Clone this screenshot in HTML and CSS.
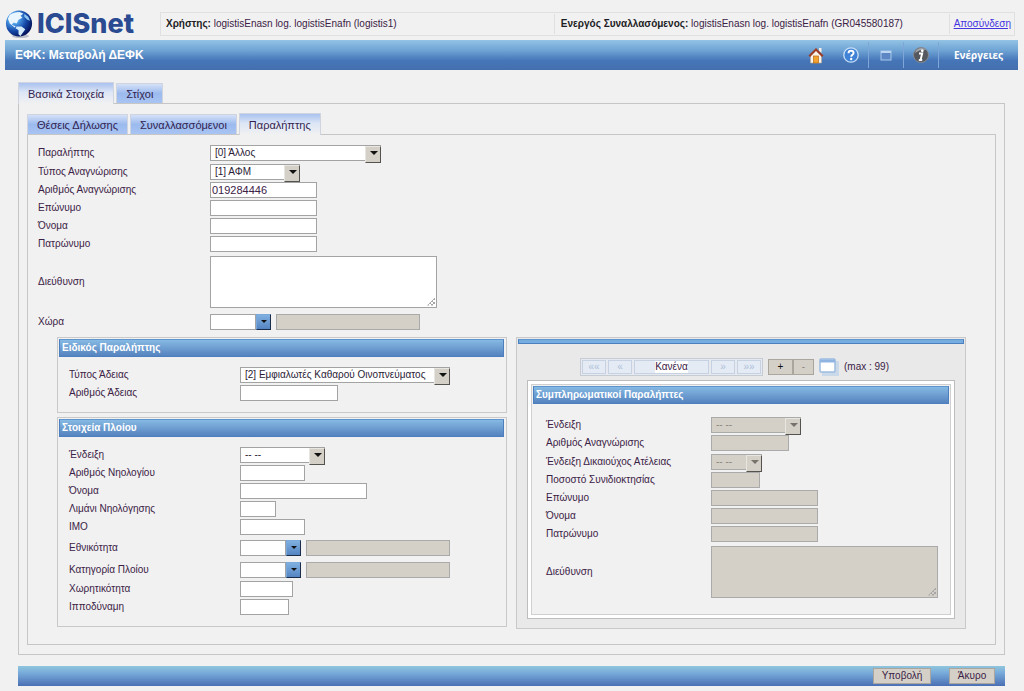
FILE: index.html
```html
<!DOCTYPE html>
<html lang="el">
<head>
<meta charset="utf-8">
<title>ICISnet - ΕΦΚ: Μεταβολή ΔΕΦΚ</title>
<link rel="stylesheet" href="styles.css">
</head>
<body>
<header class="top">
  <div class="logo">
    <svg class="globe" viewBox="0 0 30 30" aria-hidden="true">
      <defs><radialGradient id="sea" cx="0.3" cy="0.3" r="0.75"><stop offset="0" stop-color="#c3e8ff"/><stop offset="0.3" stop-color="#4c9be4"/><stop offset="0.65" stop-color="#1549a8"/><stop offset="1" stop-color="#04145c"/></radialGradient></defs>
      <ellipse cx="16" cy="27" rx="9" ry="2" fill="#b9bec8"/>
      <circle cx="14.500" cy="14" r="13.500" fill="url(#sea)"/>
      <path d="M5 5 Q9 2 15 2 L19 4 L16 6 L18 8 L14 10 L12 14 L9 13 L7 15 L11 17 L10 18 L5 14 L3 9Z" fill="#e9f6ff"/>
      <path d="M12 17 L17 17 L21 20 L18 24 L16 27 L14 25 L14 21 L11 19Z" fill="#d4ebfc"/>
      <path d="M20 4 L24 7 L26 11 L23 10 L20 7Z" fill="#8fc6f2"/>
    </svg>
    <span class="logo-text">ICISnet</span>
  </div>
  <div class="session">
    <div class="cell user"><b>Χρήστης:</b> logistisEnasn log. logistisEnafn (logistis1)</div>
    <div class="cell trader"><b>Ενεργός Συναλλασόμενος:</b> logistisEnasn log. logistisEnafn (GR045580187)</div>
    <div class="cell"><a href="#">Αποσύνδεση</a></div>
  </div>
</header>

<div class="titlebar">
  <h1>ΕΦΚ: Μεταβολή ΔΕΦΚ</h1>
  <nav class="tools">
    <button class="tool" aria-label="Αρχική">
      <svg viewBox="0 0 16 18"><path d="M2.500 9 L8 4 L13.500 9 V17 H2.500Z" fill="#f7f3ea" stroke="#b9a893" stroke-width=".6"/><path d="M11 2h2.500v5l-2.500-2z" fill="#f5eee5"/><path d="M.5 9.500 L8 2 L15.500 9.500 L14 11 L8 5 L2 11Z" fill="#9d3b24"/><rect x="5.500" y="10" width="5" height="7" fill="#f2a22e" stroke="#b96a12" stroke-width=".7"/></svg>
    </button>
    <button class="tool" aria-label="Βοήθεια">
      <svg viewBox="0 0 16 18"><circle cx="8" cy="9" r="7.200" fill="#3f82d6" stroke="#c8e0f7" stroke-width="1.300"/><path d="M5.500 7.200C5.500 5.600 6.600 4.800 8 4.800s2.600.9 2.600 2.200c0 1.700-2.400 1.900-2.400 3.800" fill="none" stroke="#fff" stroke-width="1.900"/><circle cx="8.200" cy="13" r="1.200" fill="#fff"/></svg>
    </button>
    <button class="tool split" aria-label="Παράθυρο">
      <svg viewBox="0 0 16 18"><rect x="3" y="5" width="10" height="9" fill="#5c87c4" stroke="#a9c8ea"/><path d="M3 6h10" stroke="#bcd6f1" stroke-width="2"/></svg>
    </button>
    <button class="tool split" aria-label="Πληροφορίες">
      <svg viewBox="0 0 16 18"><circle cx="8" cy="9" r="7.500" fill="#55585e" stroke="#84888f"/><path d="M2 7a6.500 6.500 0 0 1 11-3q-6-1-11 3z" fill="#a5a8ad"/><circle cx="9.300" cy="4.800" r="1.400" fill="#fff"/><path d="M6 7.500h3.200L7.600 13.800M5.800 14h3.400" fill="none" stroke="#fff" stroke-width="1.900"/></svg>
    </button>
    <button class="actions">Ενέργειες</button>
  </nav>
</div>

<main class="work">
  <div class="tabs" role="tablist">
    <button class="tab on" role="tab" aria-selected="true">Βασικά Στοιχεία</button>
    <button class="tab" role="tab" aria-selected="false">Στίχοι</button>
  </div>
  <section class="sheet outer">
    <div class="tabs" role="tablist">
      <button class="tab" role="tab" aria-selected="false">Θέσεις Δήλωσης</button>
      <button class="tab" role="tab" aria-selected="false">Συναλλασσόμενοι</button>
      <button class="tab on" role="tab" aria-selected="true">Παραλήπτης</button>
    </div>
    <form class="sheet inner" id="recipient">
      <div class="fields main-fields">
        <div class="row pick"><label for="f1">Παραλήπτης</label><span class="select w171"><select id="f1"><option>[0] Άλλος</option></select></span></div>
        <div class="row pick"><label for="f2">Τύπος Αναγνώρισης</label><span class="select w90"><select id="f2"><option>[1] ΑΦΜ</option></select></span></div>
        <div class="row"><label for="f3">Αριθμός Αναγνώρισης</label><input class="w107" id="f3" type="text" value="019284446"></div>
        <div class="row"><label for="f4">Επώνυμο</label><input class="w107" id="f4" type="text"></div>
        <div class="row"><label for="f5">Όνομα</label><input class="w107" id="f5" type="text"></div>
        <div class="row"><label for="f6">Πατρώνυμο</label><input class="w107" id="f6" type="text"></div>
        <div class="row area"><label for="f7">Διεύθυνση</label><span class="grip"><textarea id="f7"></textarea></span></div>
        <div class="row lookup"><label for="f8">Χώρα</label><input class="code" id="f8" type="text"><button type="button" class="drop" aria-label="Επιλογή χώρας"></button><input class="desc" type="text" readonly aria-label="Περιγραφή χώρας"></div>
      </div>

      <div class="columns">
        <div class="left">
          <section class="panel special">
            <h2>Ειδικός Παραλήπτης</h2>
            <div class="fields">
              <div class="row pick"><label for="s1">Τύπος Άδειας</label><span class="select w210"><select id="s1"><option>[2] Εμφιαλωτές Καθαρού Οινοπνεύματος</option></select></span></div>
              <div class="row"><label for="s2">Αριθμός Άδειας</label><input class="w98" id="s2" type="text"></div>
            </div>
          </section>
          <section class="panel">
            <h2>Στοιχεία Πλοίου</h2>
            <div class="fields">
              <div class="row pick"><label for="v1">Ένδειξη</label><span class="select w85"><select id="v1"><option>-- --</option></select></span></div>
              <div class="row"><label for="v2">Αριθμός Νηολογίου</label><input class="w65" id="v2" type="text"></div>
              <div class="row"><label for="v3">Όνομα</label><input class="w127" id="v3" type="text"></div>
              <div class="row"><label for="v4">Λιμάνι Νηολόγησης</label><input class="w36" id="v4" type="text"></div>
              <div class="row"><label for="v5">ΙΜΟ</label><input class="w65" id="v5" type="text"></div>
              <div class="row lookup"><label for="v6">Εθνικότητα</label><input class="code" id="v6" type="text"><button type="button" class="drop" aria-label="Επιλογή εθνικότητας"></button><input class="desc" type="text" readonly aria-label="Περιγραφή εθνικότητας"></div>
              <div class="row lookup"><label for="v7">Κατηγορία Πλοίου</label><input class="code" id="v7" type="text"><button type="button" class="drop" aria-label="Επιλογή κατηγορίας"></button><input class="desc" type="text" readonly aria-label="Περιγραφή κατηγορίας"></div>
              <div class="row"><label for="v8">Χωρητικότητα</label><input class="w53" id="v8" type="text"></div>
              <div class="row"><label for="v9">Ιπποδύναμη</label><input class="w49" id="v9" type="text"></div>
            </div>
          </section>
        </div>

        <section class="panel extra">
          <div class="strip"></div>
          <div class="pager">
            <div class="pages">
              <button type="button" class="pg" disabled>««</button><button type="button" class="pg" disabled>«</button>
              <div class="where"><output>Κανένα</output></div>
              <button type="button" class="pg" disabled>»</button><button type="button" class="pg" disabled>»»</button>
            </div>
            <div class="edit"><button type="button" class="op">+</button><button type="button" class="op off" disabled>-</button></div>
            <button type="button" class="grid-view" aria-label="Προβολή πίνακα"><svg viewBox="0 0 20 18"><path d="M3 3h17v15H3z" fill="#c9d9ea"/><rect x="1" y="1" width="15" height="13" rx="1" fill="#fff" stroke="#9dbce0" stroke-width="1.500"/><path d="M1 3h15" stroke="#8fb4e2" stroke-width="3"/></svg></button>
            <span class="max">(max : 99)</span>
          </div>
          <div class="frame">
            <div class="frame-in">
              <h2>Συμπληρωματικοί Παραλήπτες</h2>
              <div class="fields">
                <div class="row pick"><label for="e1">Ένδειξη</label><span class="select w90"><select id="e1" disabled><option>-- --</option></select></span></div>
                <div class="row"><label for="e2">Αριθμός Αναγνώρισης</label><input class="w78" id="e2" type="text" disabled></div>
                <div class="row pick"><label for="e3">Ένδειξη Δικαιούχος Ατέλειας</label><span class="select w51"><select id="e3" disabled><option>-- --</option></select></span></div>
                <div class="row"><label for="e4">Ποσοστό Συνιδιοκτησίας</label><input class="w49" id="e4" type="text" disabled></div>
                <div class="row"><label for="e5">Επώνυμο</label><input class="w107" id="e5" type="text" disabled></div>
                <div class="row"><label for="e6">Όνομα</label><input class="w107" id="e6" type="text" disabled></div>
                <div class="row"><label for="e7">Πατρώνυμο</label><input class="w107" id="e7" type="text" disabled></div>
                <div class="row area"><label for="e8">Διεύθυνση</label><span class="grip"><textarea id="e8" disabled></textarea></span></div>
              </div>
            </div>
          </div>
        </section>
      </div>
    </form>
  </section>
  <footer class="bottom">
    <button class="cmd" form="recipient">Υποβολή</button>
    <button class="cmd cancel" type="button">Άκυρο</button>
  </footer>
</main>
</body>
</html>
```
FILE: styles.css
```css
* { box-sizing: border-box; }

body {
  margin: 0;
  padding: 0 6px 0 5px;
  background: #f1f1f1;
  color: #3b2145;
  font-family: "Liberation Sans", Arial, sans-serif;
  font-size: 10px;
  line-height: 14px;
}

button, input, select, textarea { margin: 0; font: inherit; color: inherit; border-radius: 0; }
h1, h2 { margin: 0; color: #fff; font-weight: bold; }

/* Header */
.top { display: flex; align-items: flex-end; height: 40px; }
.logo { display: flex; align-items: center; width: 155px; height: 32px; }
.globe { width: 29px; height: 29px; margin-right: 3px; }
.logo-text { color: #2a4a92; font: 800 27px/30px Inter, sans-serif; }
.session {
  flex: 1;
  display: flex;
  gap: 2px;
  margin: 0 3px 4px 0;
  border: 1px solid #e0e0e0;
  padding: 1px;
}
.cell { border-right: 1px solid #e0e0e0; padding: 3px 4px; white-space: nowrap; }
.cell:last-child { border-right: 0; padding: 3px 2px; }
.cell b { color: #1c1c24; }
.user, .trader { flex: 1; }
.cell a { color: #4433e0; }

.titlebar {
  display: flex;
  align-items: center;
  justify-content: space-between;
  height: 30px;
  background: linear-gradient(#93c3e4, #6ea3d4 35%, #4676b8 68%, #446fae);
  padding-left: 10px;
}
.titlebar h1 { font-size: 12px; }
.tools { display: flex; align-self: stretch; align-items: center; }
.tool, .actions { border: 0; background: none; padding: 0; }
.tool { display: flex; justify-content: center; align-items: center; width: 35px; height: 26px; }
.tool svg { width: 16px; height: 18px; }
.split, .actions { border-left: 1px solid #7fa6d8; height: 26px; }
.actions { width: 80px; color: #fff; font: bold 10px/16px "Open Sans", sans-serif; }

/* Tabs */
.work { padding: 12px 13px 0; }
.tabs { display: flex; align-items: flex-end; gap: 2px; height: 21px; }
.tab {
  height: 20px;
  padding: 0 9px;
  border: 1px solid #d0d4de;
  border-bottom: 0;
  background: linear-gradient(#d5e1f8, #9bbaee 50%, #a8c4f3);
  color: #33234f;
  font-size: 11px;
  line-height: 16px;
}
.tab.on {
  position: relative;
  height: 22px;
  margin-bottom: -1px;
  background: linear-gradient(#a9c2ef, #dde6f6 45%, #f1f1f1);
}
.sheet { border: 1px solid #c6c6c6; }
.outer { padding: 9px 8px; }
.inner { padding: 8px 29px 15px; }

/* Form rows */
.row { display: flex; align-items: center; height: 18px; }
.row.pick { height: 19px; }
.row.lookup { height: 21px; margin-top: 1px; }
.row.area { height: 57px; }
.row label { flex: none; width: 171px; }
.main-fields { margin: 0 0 5px -19px; }
.main-fields label { width: 172px; }

input, textarea, select { border: 1px solid #a3a3a3; background: #fff; padding: 0 1px; }
input { height: 16px; font-size: 11px; }
input:read-only, input:disabled, textarea:disabled, select:disabled { background: #d4d0c8; border-color: #aaa; opacity: 1; }
textarea { display: block; width: 227px; height: 52px; resize: none; }
.grip { position: relative; }
.grip::after {
  content: "";
  position: absolute;
  right: 2px;
  bottom: 2px;
  width: 8px;
  height: 8px;
  background: repeating-conic-gradient(#a5a5a5 0 25%, transparent 0 50%) 0 0 / 4px 4px;
  clip-path: polygon(100% 0, 100% 100%, 0 100%);
  pointer-events: none;
}
.code { width: 46px; }
.desc { width: 144px; margin-left: 5px; }

.select { position: relative; display: flex; height: 16px; }
.select select { appearance: none; width: 100%; height: 16px; padding: 0 16px 0 4px; color: #2a1b35; }
.select select:disabled { color: #8a867e; }
.select::before {
  content: "";
  position: absolute;
  right: 0;
  top: 1px;
  width: 14px;
  height: 15px;
  background: #d4d0c8;
  border: 1px solid;
  border-color: #e8e6e0 #55534f #55534f #e8e6e0;
  pointer-events: none;
}
.select::after, .drop::after {
  content: "";
  border: 4px solid transparent;
  border-top-color: #111;
  border-bottom: 0;
  pointer-events: none;
}
.select::after { position: absolute; right: 3px; top: 6px; }
.select:has(:disabled)::after { border-top-color: #77736c; }
.drop {
  display: flex;
  align-items: center;
  justify-content: center;
  width: 15px;
  height: 16px;
  padding: 0;
  border: 1px solid;
  border-color: #79a9da #1c2c48 #1c2c48 #79a9da;
  background: linear-gradient(#7fb0e0, #5584c2);
}
.drop::after { border-width: 3px; border-bottom: 0; }

.w36 { width: 36px; }
.w49 { width: 49px; }
.w51 { width: 51px; }
.w53 { width: 53px; }
.w65 { width: 65px; }
.w78 { width: 78px; }
.w85 { width: 85px; }
.w90 { width: 90px; }
.w98 { width: 98px; }
.w107 { width: 107px; }
.w127 { width: 127px; }
.w171 { width: 171px; }
.w210 { width: 210px; }

/* Group panels */
.columns { display: grid; grid-template-columns: 1fr 1fr; align-items: start; gap: 9px; }
.left { display: flex; flex-direction: column; gap: 4px; }
.panel { border: 1px solid #c9c9c9; padding: 1px 2px 0 1px; }
.panel h2, .strip {
  border: 1px solid #4d7fbe;
  border-top-color: #5f95cd;
  background: linear-gradient(#86b9e3, #5583bf);
}
.panel h2 { height: 18px; padding: 0 2px; font-size: 10px; line-height: 16px; }
.panel .fields { padding: 8px 0 10px 10px; }
.strip { height: 5px; background: #76ade0; }

.extra { background: #e9e9e9; padding: 1px 1px 9px; }
.pager { display: flex; align-items: center; height: 18px; margin: 14px 0 4px 62px; gap: 5px; }
.pages { display: flex; gap: 2px; width: 183px; height: 18px; border: 1px solid #c6ccd4; padding: 1px; background: #e6eaf0; }
.pg { flex: none; width: 24px; padding: 0; border: 1px solid #c6d2e2; background: #e4ebf5; color: #aebfd6; line-height: 12px; }
.where { flex: 1; display: flex; justify-content: center; border: 1px solid #c6d2e2; background: #e4ebf5; }
.where output { background: #fff; line-height: 12px; }
.edit { display: flex; }
.op { width: 25px; height: 16px; padding: 0; border: 1px solid #aaa69e; background: #d4d0c8; color: #111; line-height: 12px; }
.op.off { width: 21px; color: #8a867e; }
.grid-view { display: flex; border: 0; padding: 0; background: none; }
.grid-view svg { width: 20px; height: 18px; }

.frame { margin: 0 9px; border: 1px solid #bdbdbd; padding: 3px; background: #fff; }
.frame-in { border: 1px solid #cfcfcf; padding: 1px; background: #f1f1f1; }
.frame .fields { padding: 11px 0 13px 13px; }
.frame .row label { width: 165px; }

/* Command bar */
.bottom {
  display: flex;
  justify-content: flex-end;
  align-items: center;
  gap: 18px;
  height: 20px;
  margin-top: 11px;
  padding-right: 10px;
  background: linear-gradient(#8fc6dd, #78aada 35%, #4a70b4);
}
.cmd { width: 58px; height: 16px; padding: 0; border: 1px solid #aaa69e; background: #d4d0c8; line-height: 14px; }
.cancel { width: 46px; }
```
